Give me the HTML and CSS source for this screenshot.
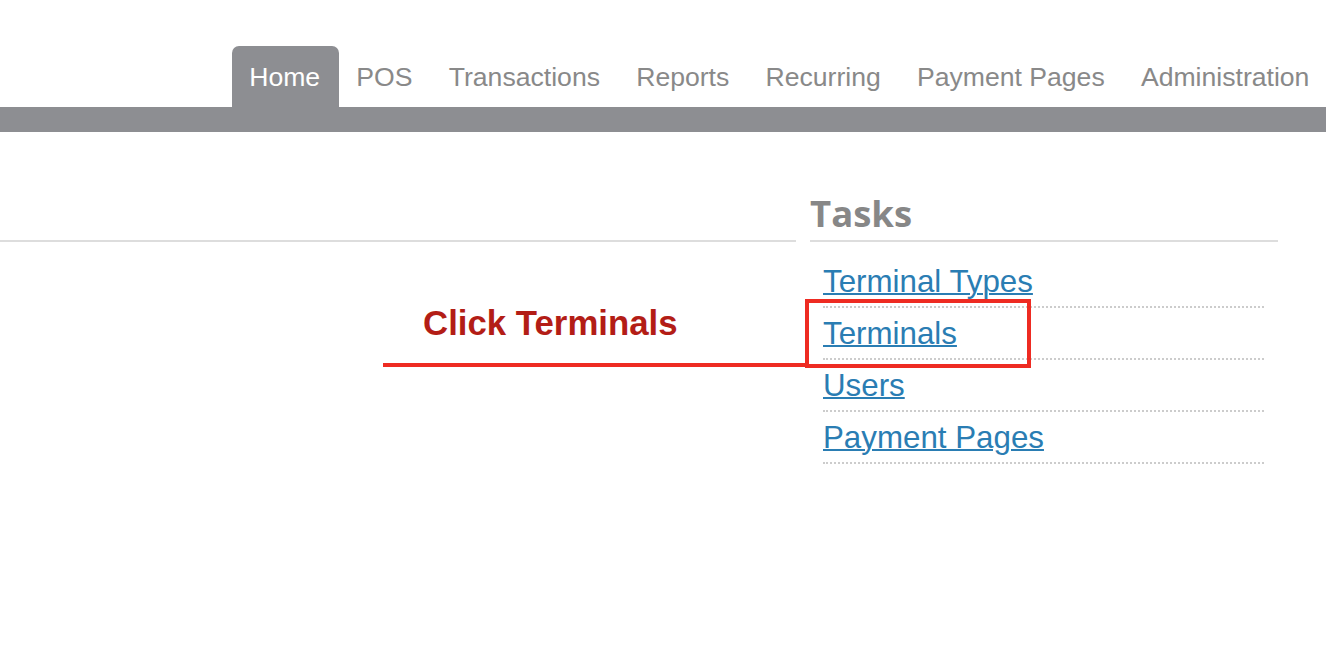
FILE: index.html
```html
<!DOCTYPE html>
<html lang="en">
  <head>
    <meta charset="UTF-8" />
    <meta name="viewport" content="width=device-width, initial-scale=1.0" />
    <title>Home</title>
    <link rel="stylesheet" href="styles.css">
  </head>
  <body>
    <header class="header">
      <nav class="topnav">
        <a href="#" class="active">Home</a>
        <a href="#">POS</a>
        <a href="#">Transactions</a>
        <a href="#">Reports</a>
        <a href="#">Recurring</a>
        <a href="#">Payment Pages</a>
        <a href="#">Administration</a>
      </nav>
      <div class="navbar-strip"></div>
    </header>

    <div class="page">
      <div class="main-col">
        <div class="main-head"></div>
      </div>
      <aside class="sidebar">
        <h2>Tasks</h2>
        <ul class="tasks">
          <li><a href="#">Terminal Types</a></li>
          <li><a href="#">Terminals</a></li>
          <li><a href="#">Users</a></li>
          <li><a href="#">Payment Pages</a></li>
        </ul>
      </aside>

      <!-- tutorial callout drawn over the page -->
      <div class="callout-text">Click Terminals</div>
      <div class="callout-line"></div>
      <div class="callout-box"></div>
    </div>
  </body>
</html>
```

FILE: styles.css
```css
:root {
  --nav-gray: #8d8e92;
  --text-gray: #898989;
  --rule-color: #dddddd;
  --link-color: #2a7db3;
  --callout-red: #ee2b22;
}

body {
  margin: 0;
  font-family: "Liberation Sans", Arial, sans-serif;
  background: #fff;
}

.header {
  padding-top: 46px;
}

.topnav {
  display: flex;
  justify-content: flex-end;
}

.topnav a {
  display: block;
  height: 59px;
  line-height: 59px;
  padding: 2px 18.6px 0 17.6px;
  font-size: 26.6px;
  color: var(--text-gray);
  text-decoration: none;
}

.topnav a:last-child {
  padding-right: 16.6px;
}

.topnav a.active {
  background-color: var(--nav-gray);
  color: #fff;
  border-radius: 7px 7px 0 0;
}

.navbar-strip {
  height: 25px;
  background-color: var(--nav-gray);
}

.page {
  position: relative;
  display: flex;
  gap: 14px;
  padding-right: 48px;
}

.main-col {
  width: 796px;
}

.main-head {
  height: 108px;
  border-bottom: 2px solid var(--rule-color);
}

.sidebar {
  flex: 1;
}

.sidebar h2 {
  margin: 62px 0 0;
  height: 38px;
  line-height: 38px;
  padding-bottom: 8px;
  font-family: "Open Sans", "DejaVu Sans", sans-serif;
  font-weight: 700;
  font-size: 36.5px;
  color: #878787;
  border-bottom: 2px solid var(--rule-color);
}

.tasks {
  list-style: none;
  margin: 0 14px 0 13px;
  padding: 14px 0 0;
}

.tasks li {
  height: 48px;
  line-height: 48px;
  padding-top: 2px;
  border-bottom: 2px dotted #cccccc;
}

.tasks a {
  font-size: 31.3px;
  color: var(--link-color);
  text-decoration: underline;
  text-decoration-thickness: 2px;
}

.callout-text {
  position: absolute;
  left: 423px;
  top: 171px;
  font-size: 34.8px;
  font-weight: 700;
  color: #b31d16;
}

.callout-line {
  position: absolute;
  left: 383px;
  top: 231px;
  width: 424px;
  height: 4px;
  background-color: var(--callout-red);
}

.callout-box {
  position: absolute;
  left: 805px;
  top: 167px;
  width: 218px;
  height: 61px;
  border: 4px solid var(--callout-red);
}
```
